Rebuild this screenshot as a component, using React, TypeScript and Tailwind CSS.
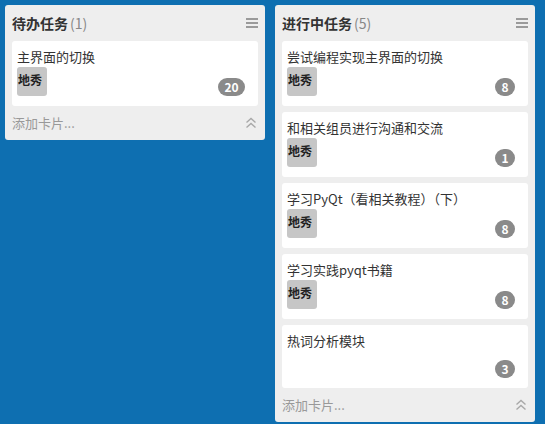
import React from 'react';

interface Card {
  title: string;
  tag?: string;
  count: number;
}

interface List {
  name: string;
  cards: Card[];
}

const lists: List[] = [
  {
    name: '待办任务',
    cards: [{ title: '主界面的切换', tag: '地秀', count: 20 }],
  },
  {
    name: '进行中任务',
    cards: [
      { title: '尝试编程实现主界面的切换', tag: '地秀', count: 8 },
      { title: '和相关组员进行沟通和交流', tag: '地秀', count: 1 },
      { title: '学习PyQt（看相关教程）（下）', tag: '地秀', count: 8 },
      { title: '学习实践pyqt书籍', tag: '地秀', count: 8 },
      { title: '热词分析模块', count: 3 },
    ],
  },
];

const font = { fontFamily: '"Noto Sans CJK SC", "Liberation Sans", sans-serif' };

function Menu() {
  return (
    <div className="flex flex-col gap-[2px] w-[12px]">
      <span className="h-[2px] bg-[#9a9a9a]" />
      <span className="h-[2px] bg-[#9a9a9a]" />
      <span className="h-[2px] bg-[#9a9a9a]" />
    </div>
  );
}

function Collapse() {
  return (
    <svg width="12" height="12" viewBox="0 0 12 12" fill="none" stroke="#a8a8a8" strokeWidth="1.4">
      <path d="M1.5 5.5 L6 1.5 L10.5 5.5" />
      <path d="M1.5 10.5 L6 6.5 L10.5 10.5" />
    </svg>
  );
}

function TaskCard({ card }: { card: Card }) {
  return (
    <div className="bg-white rounded-[3px] px-[5px] pt-[6px] pb-[10px]">
      <div className="text-[13px] leading-[20px] text-[#333]">{card.title}</div>
      <div className="flex items-end justify-between min-h-[27px] pr-[8px]">
        {card.tag ? (
          <span className="w-[30px] h-[29px] bg-[#c6c6c6] rounded-[3px] text-[12px] font-bold text-[#222] leading-[18px] pt-[4px] pl-[1px]">
            {card.tag}
          </span>
        ) : (
          <span />
        )}
        <span
          className={`h-[18px] rounded-full bg-[#8a8a8a] text-white text-[12px] font-bold leading-[18px] text-center ${
            card.count >= 10 ? 'w-[27px]' : 'w-[20px]'
          }`}
        >
          {card.count}
        </span>
      </div>
    </div>
  );
}

function TaskList({ list }: { list: List }) {
  return (
    <div className="w-[260px] bg-[#eeeeee] rounded-[3px] px-[7px]">
      <div className="h-[36px] flex items-center justify-between">
        <div className="text-[14px]">
          <span className="font-bold text-[#333]">{list.name}</span>
          <span className="ml-[2px] text-[#888]">({list.cards.length})</span>
        </div>
        <Menu />
      </div>
      <div className="flex flex-col gap-[6px]">
        {list.cards.map((c, i) => (
          <TaskCard key={i} card={c} />
        ))}
      </div>
      <div className="h-[34px] flex items-center justify-between pr-[1px]">
        <span className="text-[13px] text-[#999]">添加卡片...</span>
        <Collapse />
      </div>
    </div>
  );
}

export default function App() {
  return (
    <div className="w-[545px] h-[424px] bg-[#0e6fb1] flex items-start gap-[10px] p-[5px]" style={font}>
      {lists.map((l) => (
        <TaskList key={l.name} list={l} />
      ))}
    </div>
  );
}
